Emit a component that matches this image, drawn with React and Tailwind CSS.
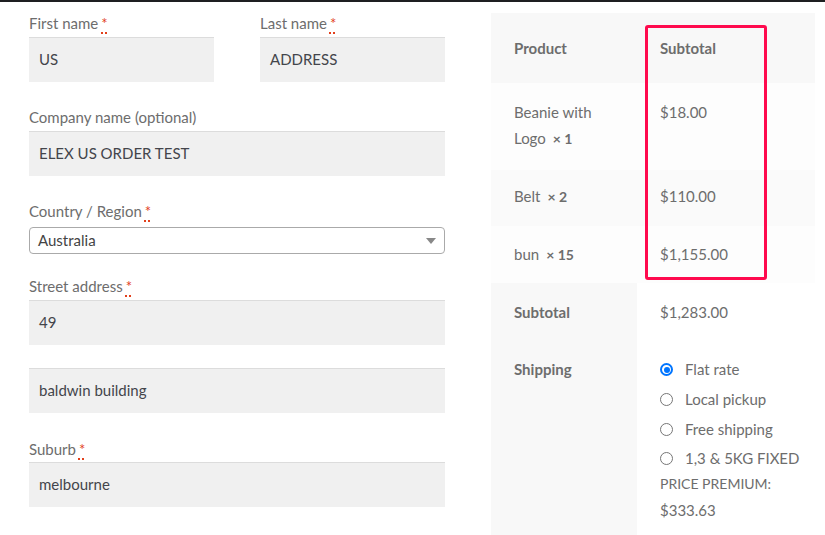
import React from "react";

function Req() {
  return (
    <span className="ml-[3px] text-[#e2401c] underline decoration-dotted decoration-[2px] underline-offset-[3px]">*</span>
  );
}

function Label({ children, required }) {
  return (
    <div className="h-[24px] leading-[24px] text-[15px] text-[#6d6d6d]">
      {children}
      {required && <Req />}
    </div>
  );
}

function Field({ value, className = "" }) {
  return (
    <div
      className={
        "h-[45px] bg-[#f0f0f0] border-t border-[#dcdcdc] px-[10px] pb-[2px] flex items-center text-[15px] text-[#43454b] " +
        className
      }
    >
      {value}
    </div>
  );
}

function Radio({ checked }) {
  return checked ? (
    <span className="inline-block align-[-1px] w-[13px] h-[13px] rounded-full border-[2px] border-[#0075ff] bg-white relative mr-[12px]">
      <span className="absolute inset-[1.5px] rounded-full bg-[#0075ff]" />
    </span>
  ) : (
    <span className="inline-block align-[-1px] w-[13px] h-[13px] rounded-full border border-[#767676] bg-white mr-[12px]" />
  );
}

export default function App() {
  const rows = [
    { name: ["Beanie with", "Logo"], qty: 1, price: "$18.00", bg: "bg-[#fdfdfd]", h: "h-[87px] pt-[16px]" },
    { name: ["Belt"], qty: 2, price: "$110.00", bg: "bg-[#fafafa]", h: "h-[56px] pt-[13px]" },
    { name: ["bun"], qty: 15, price: "$1,155.00", bg: "bg-[#fdfdfd]", h: "h-[57px] pt-[15px]" },
  ];

  return (
    <div
      className="w-[825px] h-[535px] overflow-hidden bg-white"
      style={{ fontFamily: "Lato, 'Noto Sans', sans-serif" }}
    >
      <div className="h-[2px] bg-[#1e1f21]" />
      <div className="flex">
        {/* billing form */}
        <div className="ml-[29px] w-[416px] pt-[9px]">
          <div className="flex gap-[46px]">
            <div className="w-[185px]">
              <Label required>First name</Label>
              <Field value="US" className="mt-[2px] h-[44px]" />
            </div>
            <div className="w-[185px]">
              <Label required>Last name</Label>
              <Field value="ADDRESS" className="mt-[2px] h-[44px]" />
            </div>
          </div>

          <div className="mt-[23px]">
            <Label>Company name (optional)</Label>
            <Field value="ELEX US ORDER TEST" className="mt-[2px]" />
          </div>

          <div className="mt-[23px]">
            <Label required>Country / Region</Label>
            <div className="mt-[4px] h-[27px] border border-[#aaaaaa] rounded-[4px] flex items-center justify-between pl-[8px] pr-[8px] text-[15px] text-[#444]">
              <span>Australia</span>
              <span className="w-0 h-0 border-l-[5px] border-r-[5px] border-t-[6px] border-l-transparent border-r-transparent border-t-[#888]" />
            </div>
          </div>

          <div className="mt-[20px]">
            <Label required>Street address</Label>
            <Field value="49" className="mt-[2px] h-[44px]" />
          </div>

          <Field value="baldwin building" className="mt-[23px]" />

          <div className="mt-[24px]">
            <Label required>Suburb</Label>
            <Field value="melbourne" className="mt-[1px]" />
          </div>
        </div>

        {/* order review */}
        <div className="ml-[46px] w-[324px] mt-[11px] relative text-[15px] text-[#6d6d6d]">
          <div className="flex h-[70px] bg-[#f8f8f8] items-center font-bold">
            <div className="w-[146px] pl-[23px]">Product</div>
            <div className="pl-[23px]">Subtotal</div>
          </div>
          {rows.map((r, i) => (
            <div key={i} className={"flex leading-[26px] " + r.bg + " " + r.h}>
              <div className="w-[146px] pl-[23px]">
                {r.name.map((n, j) => (
                  <div key={j}>
                    {n}
                    {j === r.name.length - 1 && (
                      <span className="ml-[7px] font-bold text-[14px]">× {r.qty}</span>
                    )}
                  </div>
                ))}
              </div>
              <div className="pl-[23px]">{r.price}</div>
            </div>
          ))}
          <div className="flex h-[57px] leading-[26px]">
            <div className="w-[146px] pl-[23px] pt-[16px] bg-[#f8f8f8] font-bold">Subtotal</div>
            <div className="pl-[23px] pt-[16px]">$1,283.00</div>
          </div>
          <div className="flex h-[200px]">
            <div className="w-[146px] pl-[23px] pt-[16px] bg-[#f8f8f8] font-bold leading-[26px]">Shipping</div>
            <div className="pl-[23px] pt-[16px] leading-[26px]">
              <div>
                <Radio checked />
                Flat rate
              </div>
              <div className="mt-[4px]">
                <Radio />
                Local pickup
              </div>
              <div className="mt-[4px]">
                <Radio />
                Free shipping
              </div>
              <div className="mt-[3px]">
                <Radio />
                1,3 &amp; 5KG FIXED
              </div>
              <div className="text-[14px]">PRICE PREMIUM:</div>
              <div>$333.63</div>
            </div>
          </div>

          {/* annotation box */}
          <div className="absolute left-[154px] top-[12px] w-[122px] h-[255px] border-[3px] border-[#ff0a4e] rounded-[3px] pointer-events-none" />
        </div>
      </div>
    </div>
  );
}
